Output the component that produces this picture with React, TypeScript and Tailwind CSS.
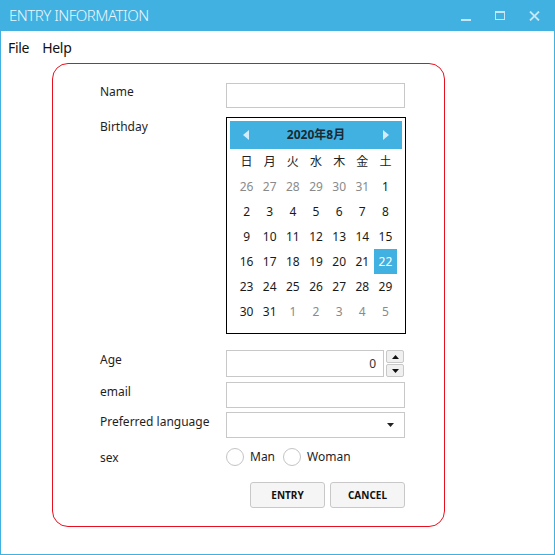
import React from 'react';

const FONT = { fontFamily: '"Noto Sans", "Noto Sans CJK JP", sans-serif' };

const WEEK = ['日', '月', '火', '水', '木', '金', '土'];

const buildDays = () => {
  const cells: { d: number; cur: boolean }[] = [];
  [26, 27, 28, 29, 30, 31].forEach(d => cells.push({ d, cur: false }));
  for (let d = 1; d <= 31; d++) cells.push({ d, cur: true });
  for (let d = 1; d <= 5; d++) cells.push({ d, cur: false });
  return cells;
};

const Calendar: React.FC = () => {
  const days = buildDays();
  return (
    <div className="w-[180px] h-[217px] border border-black p-[3px] bg-white">
      <div className="h-[28px] bg-[#41b1e1] flex items-center justify-between px-[13px]">
        <svg width="6" height="10" viewBox="0 0 6 10"><path d="M6 0 L0 5 L6 10 Z" fill="#d4ecf8" /></svg>
        <span className="text-[12px] font-bold text-[#1b2a33]">2020年8月</span>
        <svg width="6" height="10" viewBox="0 0 6 10"><path d="M0 0 L6 5 L0 10 Z" fill="#d4ecf8" /></svg>
      </div>
      <div className="px-[5px] grid grid-cols-7">
        {WEEK.map(w => (
          <div key={w} className="h-[25px] flex items-center justify-center text-[12px] text-[#222]">{w}</div>
        ))}
        {days.map((c, i) => {
          const sel = c.cur && c.d === 22;
          return (
            <div
              key={i}
              className={`h-[25px] flex items-center justify-center text-[12px] ${
                sel ? 'bg-[#41b1e1] text-white' : c.cur ? 'text-[#1a1a1a]' : 'text-[#8a8a8a]'
              }`}
            >
              {c.d}
            </div>
          );
        })}
      </div>
    </div>
  );
};

const Row: React.FC<{ label: string; pt: string; children: React.ReactNode }> = ({ label, pt, children }) => (
  <div className="flex">
    <div className={`w-[126px] text-[12px] text-[#1e1e1e] ${pt}`}>{label}</div>
    {children}
  </div>
);

const Radio: React.FC<{ label: string }> = ({ label }) => (
  <div className="flex items-center gap-[6px]">
    <span className="w-[18px] h-[18px] rounded-full border border-[#c4c4c4] bg-white" />
    <span className="text-[12px] text-[#1e1e1e]">{label}</span>
  </div>
);

const App: React.FC = () => {
  return (
    <div className="w-[555px] h-[555px] bg-[#41b1e1] flex flex-col" style={FONT}>
      {/* title bar */}
      <div className="h-[31px] flex items-center justify-between pl-[9px] shrink-0">
        <span className="text-[15px] text-[#eaf6fc] font-light tracking-[-0.5px]">ENTRY INFORMATION</span>
        <div className="flex items-center h-full">
          <div className="w-[34px] h-full flex items-center justify-center">
            <span className="w-[10px] h-[2px] bg-[#c5e6f6] mt-[9px]" />
          </div>
          <div className="w-[34px] h-full flex items-center justify-center">
            <span className="w-[10px] h-[9px] border border-[#c5e6f6] border-t-2" />
          </div>
          <div className="w-[34px] h-full flex items-center justify-center mr-[4px]">
            <svg width="11" height="10" viewBox="0 0 11 10">
              <path d="M1 0.5 L10 9.5 M10 0.5 L1 9.5" stroke="#c5e6f6" strokeWidth="1.8" />
            </svg>
          </div>
        </div>
      </div>
      {/* body */}
      <div className="flex-1 bg-white mx-[1px] mb-[1px] flex flex-col">
        <div className="h-[32px] flex items-center text-[14px] text-[#111] pl-[7px] gap-[13px] tracking-[-0.3px]">
          <span>File</span>
          <span>Help</span>
        </div>
        <div className="ml-[51px] w-[393px] h-[464px] border border-[#e8101e] rounded-[16px] pt-[19px] pl-[47px] flex flex-col">
          <Row label="Name" pt="pt-[0px]">
            <div className="w-[179px] h-[25px] border border-[#c8c8c8]" />
          </Row>
          <div className="h-[9px]" />
          <Row label="Birthday" pt="pt-[1px]">
            <Calendar />
          </Row>
          <div className="h-[16px]" />
          <Row label="Age" pt="pt-[1px]">
            <div className="flex items-center gap-[2px]">
              <div className="w-[158px] h-[27px] border border-[#c8c8c8] flex items-center justify-end pr-[7px] text-[12px] text-[#333]">0</div>
              <div className="flex flex-col gap-[1px]">
                <div className="w-[18px] h-[13px] bg-[#f0f0f0] border border-[#c8c8c8] rounded-[2px] flex items-center justify-center">
                  <svg width="7" height="4" viewBox="0 0 7 4"><path d="M0 4 L3.5 0 L7 4 Z" fill="#111" /></svg>
                </div>
                <div className="w-[18px] h-[13px] bg-[#f0f0f0] border border-[#c8c8c8] rounded-[2px] flex items-center justify-center">
                  <svg width="7" height="4" viewBox="0 0 7 4"><path d="M0 0 L3.5 4 L7 0 Z" fill="#111" /></svg>
                </div>
              </div>
            </div>
          </Row>
          <div className="h-[5px]" />
          <Row label="email" pt="pt-[1px]">
            <div className="w-[179px] h-[26px] border border-[#c8c8c8]" />
          </Row>
          <div className="h-[4px]" />
          <Row label="Preferred language" pt="pt-[1px]">
            <div className="w-[179px] h-[26px] border border-[#c8c8c8] flex items-center justify-end pr-[10px]">
              <svg width="7" height="4" viewBox="0 0 7 4"><path d="M0 0 L3.5 4 L7 0 Z" fill="#222" /></svg>
            </div>
          </Row>
          <div className="h-[10px]" />
          <Row label="sex" pt="pt-[1px]">
            <div className="flex items-center gap-[8px] h-[18px]">
              <Radio label="Man" />
              <Radio label="Woman" />
            </div>
          </Row>
          <div className="flex justify-end gap-[5px] mt-[15px] mr-[39px]">
            <button className="w-[75px] h-[26px] bg-[#f5f5f5] border border-[#c8c8c8] rounded-[3px] text-[10px] font-bold text-[#111]">ENTRY</button>
            <button className="w-[75px] h-[26px] bg-[#f5f5f5] border border-[#c8c8c8] rounded-[3px] text-[10px] font-bold text-[#111]">CANCEL</button>
          </div>
        </div>
      </div>
    </div>
  );
};

export default App;
